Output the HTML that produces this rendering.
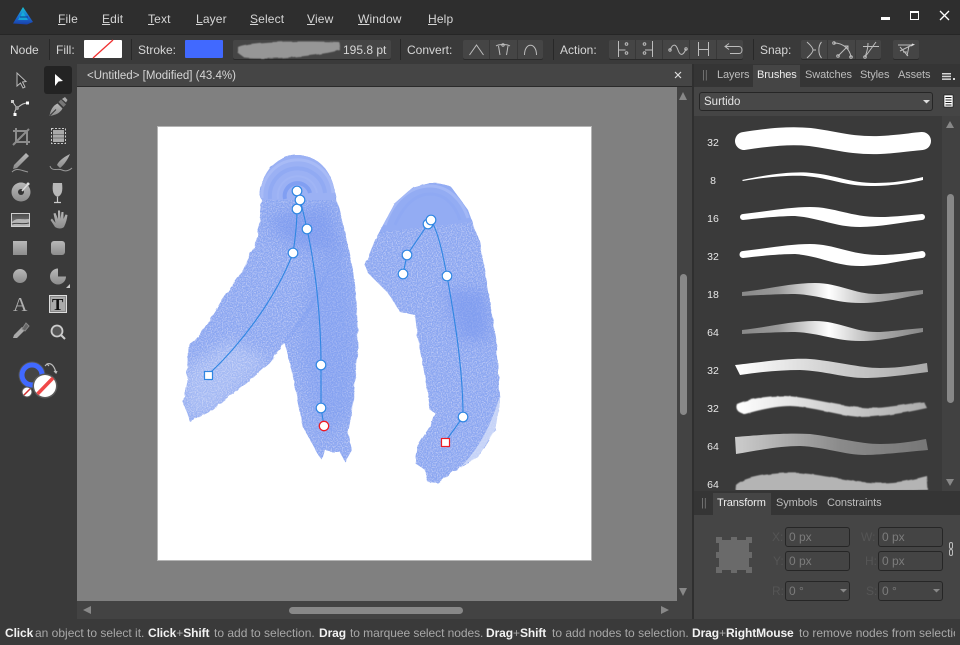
<!DOCTYPE html>
<html><head><meta charset="utf-8"><style>
html,body{margin:0;padding:0;background:#3a3a3a;}
#r{position:relative;width:960px;height:645px;overflow:hidden;background:#3a3a3a;font:12px "Liberation Sans",sans-serif;color:#d6d6d6;}
#r div,#r span.a{position:absolute;white-space:nowrap;}
.t{line-height:16px;height:16px;}
.m{letter-spacing:.15px;}
.p{font-size:11px;letter-spacing:-.1px;}
.g{background:#454545;border-radius:2px;box-shadow:0 1px 0 #2a2a2a;}
.sep{width:1px;background:#282828;top:39px;height:21px;}
.f{border:1px solid #262626;background:#444;border-radius:3px;color:#7c7c7c;box-sizing:border-box;height:20px;line-height:18px;padding-left:3px;width:65px;}
.l{color:#555;}
.n{font-size:10.5px;color:#e8e8e8;width:30px;text-align:center;left:698px;line-height:12px;}
b{color:#f2f2f2;letter-spacing:-.1px;}
svg{position:absolute;left:0;top:0;}
</style></head><body><div id="r">
<div style="left:0;top:0;width:960px;height:34px;background:#2e2e2e"></div>
<div style="left:0;top:34px;width:960px;height:1px;background:#262626"></div>
<div class="t m" style="left:58px;top:11px"><u>F</u>ile</div>
<div class="t m" style="left:102px;top:11px"><u>E</u>dit</div>
<div class="t m" style="left:148px;top:11px"><u>T</u>ext</div>
<div class="t m" style="left:196px;top:11px"><u>L</u>ayer</div>
<div class="t m" style="left:250px;top:11px"><u>S</u>elect</div>
<div class="t m" style="left:307px;top:11px"><u>V</u>iew</div>
<div class="t m" style="left:358px;top:11px"><u>W</u>indow</div>
<div class="t m" style="left:428px;top:11px"><u>H</u>elp</div>

<div class="t" style="left:10px;top:42px">Node</div>
<div class="sep" style="left:49px"></div>
<div class="t" style="left:56px;top:42px">Fill:</div>
<div class="sep" style="left:131px"></div>
<div class="t" style="left:138px;top:42px">Stroke:</div>
<div style="left:185px;top:40px;width:38px;height:18px;background:#4169ff;border-radius:1px"></div>
<div class="g" style="left:233px;top:40px;width:158px;height:19px"></div>
<div class="t" style="left:343px;top:42px">195.8 pt</div>
<div class="sep" style="left:400px"></div>
<div class="t" style="left:407px;top:42px">Convert:</div>
<div class="g" style="left:463px;top:40px;width:80px;height:19px"></div>
<div class="sep" style="left:553px"></div>
<div class="t" style="left:560px;top:42px">Action:</div>
<div class="g" style="left:609px;top:40px;width:134px;height:19px"></div>
<div class="sep" style="left:753px"></div>
<div class="t" style="left:760px;top:42px">Snap:</div>
<div class="g" style="left:801px;top:40px;width:80px;height:19px"></div>
<div class="g" style="left:893px;top:40px;width:26px;height:19px"></div>

<div style="left:77px;top:64px;width:615px;height:22px;background:#454545"></div>
<div style="left:77px;top:86px;width:615px;height:1px;background:#2a2a2a"></div>
<div class="t" style="left:87px;top:68px;font-size:11.5px">&lt;Untitled&gt; [Modified] (43.4%)</div>
<div style="left:77px;top:87px;width:600px;height:514px;background:#808080"></div>
<div style="left:677px;top:87px;width:15px;height:532px;background:#434343"></div>
<div style="left:77px;top:601px;width:615px;height:18px;background:#434343"></div>
<div style="left:680px;top:274px;width:7px;height:141px;background:#888;border-radius:4px"></div>
<div style="left:289px;top:607px;width:174px;height:7px;background:#888;border-radius:4px"></div>
<div style="left:692px;top:64px;width:2px;height:555px;background:#2f2f2f"></div>
<div style="left:158px;top:127px;width:433px;height:433px;background:#fff;box-shadow:0 0 0 1px #b4b4b4"></div>

<div style="left:694px;top:64px;width:266px;height:23px;background:#353535"></div>
<div class="t" style="left:753px;top:65px;width:47px;height:22px;background:#454545"></div>
<div class="t" style="left:702px;top:67px;color:#777;font-size:11px">||</div>
<div class="t p" style="left:717px;top:67px;color:#bcbcbc">Layers</div>
<div class="t p" style="left:757px;top:67px;color:#eee">Brushes</div>
<div class="t p" style="left:805px;top:67px;color:#bcbcbc">Swatches</div>
<div class="t p" style="left:860px;top:67px;color:#bcbcbc">Styles</div>
<div class="t p" style="left:898px;top:67px;color:#bcbcbc">Assets</div>
<div style="left:694px;top:87px;width:266px;height:29px;background:#454545"></div>
<div style="left:699px;top:92px;width:234px;height:19px;background:#484848;border:1px solid #262626;border-radius:3px;box-sizing:border-box"></div>
<div class="t" style="left:704px;top:94px;color:#e4e4e4;font-size:11.5px">Surtido</div>
<div style="left:694px;top:116px;width:248px;height:375px;background:#3a3a3a"></div>
<div style="left:942px;top:116px;width:18px;height:375px;background:#414141"></div>
<div style="left:947px;top:194px;width:7px;height:209px;background:#888;border-radius:4px"></div>
<div class="n" style="top:137px">32</div><div class="n" style="top:175px">8</div><div class="n" style="top:213px">16</div><div class="n" style="top:251px">32</div><div class="n" style="top:289px">18</div><div class="n" style="top:327px">64</div><div class="n" style="top:365px">32</div><div class="n" style="top:403px">32</div><div class="n" style="top:441px">64</div><div class="n" style="top:479px">64</div>

<div style="left:694px;top:491px;width:266px;height:24px;background:#353535"></div>
<div style="left:713px;top:493px;width:58px;height:22px;background:#454545"></div>
<div class="t" style="left:701px;top:495px;color:#777;font-size:11px">||</div>
<div class="t p" style="left:717px;top:495px;color:#eee">Transform</div>
<div class="t p" style="left:776px;top:495px;color:#bcbcbc">Symbols</div>
<div class="t p" style="left:827px;top:495px;color:#bcbcbc">Constraints</div>
<div style="left:694px;top:515px;width:266px;height:104px;background:#454545"></div>
<div class="t l" style="left:772px;top:529px">X:</div><div class="f" style="left:785px;top:527px">0 px</div>
<div class="t l" style="left:861px;top:529px">W:</div><div class="f" style="left:878px;top:527px">0 px</div>
<div class="t l" style="left:773px;top:553px">Y:</div><div class="f" style="left:785px;top:551px">0 px</div>
<div class="t l" style="left:865px;top:553px">H:</div><div class="f" style="left:878px;top:551px">0 px</div>
<div class="t l" style="left:772px;top:583px">R:</div><div class="f" style="left:785px;top:581px">0 °</div>
<div class="t l" style="left:866px;top:583px">S:</div><div class="f" style="left:878px;top:581px">0 °</div>

<div style="left:0;top:619px;width:960px;height:26px;background:#3a3a3a"></div>
<div style="left:0;top:620px;width:955px;height:25px;overflow:hidden;color:#a8a8a8">
<span class="a t" style="left:5px;top:5px"><b>Click</b></span>
<span class="a t" style="left:35px;top:5px">an object to select it.</span>
<span class="a t" style="left:148px;top:5px"><b>Click</b>+<b>Shift</b></span>
<span class="a t" style="left:214px;top:5px">to add to selection.</span>
<span class="a t" style="left:319px;top:5px"><b>Drag</b></span>
<span class="a t" style="left:350px;top:5px;letter-spacing:-.06px">to marquee select nodes.</span>
<span class="a t" style="left:486px;top:5px"><b>Drag</b>+<b>Shift</b></span>
<span class="a t" style="left:552px;top:5px">to add nodes to selection.</span>
<span class="a t" style="left:692px;top:5px"><b>Drag</b>+<b>RightMouse</b></span>
<span class="a t" style="left:799px;top:5px">to remove nodes from selection.</span>
</div>

<svg width="960" height="645" viewBox="0 0 960 645">
<defs>
<filter id="wc" x="-5%" y="-5%" width="110%" height="110%">
<feTurbulence type="fractalNoise" baseFrequency="0.12" numOctaves="3" seed="4" result="n"/>
<feDisplacementMap in="SourceGraphic" in2="n" scale="3.500" result="d"/>
<feTurbulence type="fractalNoise" baseFrequency="0.8" numOctaves="2" seed="9"/>
<feColorMatrix values="0 0 0 0 1 0 0 0 0 1 0 0 0 0 1 1 0 0 0 -0.42"/>
<feComposite in2="d" operator="in" result="w"/>
<feMerge><feMergeNode in="d"/><feMergeNode in="w"/></feMerge>
</filter>
<filter id="rough" x="-5%" y="-20%" width="110%" height="140%">
<feTurbulence type="fractalNoise" baseFrequency="0.25" numOctaves="2" seed="3"/>
<feDisplacementMap in="SourceGraphic" scale="2"/>
</filter>
<filter id="soft" x="-5%" y="-30%" width="110%" height="160%">
<feTurbulence type="fractalNoise" baseFrequency="0.1" numOctaves="2" seed="6"/>
<feDisplacementMap in="SourceGraphic" scale="2"/>
<feGaussianBlur stdDeviation=".5"/>
</filter>
<filter id="bl" x="-30%" y="-30%" width="160%" height="160%"><feGaussianBlur stdDeviation="7"/></filter>
<linearGradient id="g5"><stop offset="0" stop-color="#888"/><stop offset=".2" stop-color="#999"/><stop offset=".48" stop-color="#fff"/><stop offset=".75" stop-color="#aaa"/><stop offset="1" stop-color="#888"/></linearGradient>
<linearGradient id="g7"><stop offset="0" stop-color="#fff"/><stop offset=".5" stop-color="#d0d0d0"/><stop offset="1" stop-color="#aaa"/></linearGradient>
<linearGradient id="g9"><stop offset="0" stop-color="#ccc"/><stop offset=".55" stop-color="#8a8a8a"/><stop offset="1" stop-color="#777"/></linearGradient>
<linearGradient id="lg" x1="0" y1="0" x2="0" y2="1"><stop offset="0" stop-color="#19c4d0"/><stop offset=".55" stop-color="#1a70d8"/><stop offset="1" stop-color="#1a3fa8"/></linearGradient>
<linearGradient id="ic" x1="0" y1="0" x2="0" y2="1"><stop offset="0" stop-color="#b8b8b8"/><stop offset="1" stop-color="#8c8c8c"/></linearGradient>
<linearGradient id="sky" x1="0" y1="0" x2="0" y2="1"><stop offset="0" stop-color="#4a4a4a"/><stop offset="1" stop-color="#8a8a8a"/></linearGradient>
<clipPath id="listclip"><rect x="694" y="116" width="248" height="374"/></clipPath>
<clipPath id="pv"><rect x="158" y="127" width="433" height="433"/></clipPath>
<path id="s1" d="M260 197 C260 172 278 155 297 155 C317 155 332 170 335 193 L343 223 L353 270 L357 307 L358 350 L355 380 L353 407 L348 433 L352 450 L345 462 L340 452 L333 452 L325 450 L322 460 L317 453 L310 440 L303 427 L293 377 L285 343 L270 363 L247 383 L213 410 L190 422 L183 402 L187 380 L188 347 L203 330 L220 303 L243 270 L257 240 L262 200Z"/>
<path id="s2" d="M430 183 C440 183 450 185 452 188 L468 210 L480 243 L487 283 L497 347 L500 403 L495 430 L478 457 L455 470 L438 483 L428 482 L425 470 L415 463 L418 445 L432 423 L435 413 L430 410 L427 387 L418 340 L415 315 L400 312 L388 293 L368 273 L365 265 L375 240 L395 203 L412 188Z"/>
<clipPath id="c1"><use href="#s1"/></clipPath>
<clipPath id="c2"><use href="#s2"/></clipPath>
<path id="w1" d="M743 214 C770 211 790 207 810 207 C835 207 850 217 880 217 C895 217 910 215 922 214 A3 3 0 0 1 922 220 C905 222 880 227 860 227 C835 227 820 218 795 216 C780 216 760 218 743 220 A3 3 0 0 1 743 214Z"/>
<path id="w5" d="M742 292 C770 289 790 283 815 283 C840 283 855 295 880 294 C895 293 910 291 923 290 L923 294 C905 297 885 303 860 303 C835 303 820 295 795 294 C780 294 760 295 742 296Z"/>
</defs>

<!-- logo -->
<path d="M23 7 L33 22 L27 24.500 L13 23.500 Z" fill="url(#lg)"/>
<path d="M23 12 L28 20 L18 20Z" fill="#14c0d8" opacity=".7"/>
<path d="M20 17h8" stroke="#0f3a90"/>

<!-- window buttons -->
<rect x="881" y="17" width="9" height="3" fill="#fff"/>
<rect x="910.500" y="11.500" width="8" height="8" fill="none" stroke="#fff"/><rect x="910" y="11" width="9" height="2" fill="#fff"/>
<path d="M940 11 L949 20 M949 11 L940 20" stroke="#fff" stroke-width="1.300"/>

<!-- fill swatch -->
<rect x="84" y="40" width="38" height="18" rx="1" fill="#fff"/>
<path d="M93 58 L113 40" stroke="#f03030" stroke-width="1.300"/>
<!-- stroke preview -->
<path d="M238 47 C250 41 300 41 339 42 L340 50 C320 56 270 60 245 58 L238 53Z" fill="#969696" filter="url(#soft)"/>

<!-- toolbar separators & icons -->
<g stroke="#383838"><path d="M489.500 40v19M517.500 40v19M635.500 40v19M662.500 40v19M689.500 40v19M716.500 40v19M827.500 40v19M855.500 40v19"/></g>
<g fill="none" stroke="#bdbdbd" stroke-width="1">
<path d="M469.500 55 L476.500 45 L483.500 55"/>
<path d="M496 46 C499 44 507 44 510 46 M498.500 46 L500 55 M508 46 L506.500 55"/><circle cx="503" cy="45" r="1.200"/>
<path d="M524.500 55 C524.500 42 536.500 42 536.500 55"/>
<path d="M618.500 41v16M618.500 50h7"/><circle cx="626.500" cy="44" r="1.300"/><circle cx="626.500" cy="53" r="1.300"/>
<path d="M652.500 41v16M645 50h7.500"/><circle cx="644.500" cy="44" r="1.300"/><circle cx="644.500" cy="53" r="1.300"/>
<path d="M670 50 C673 43 676 44 678 50 C680 56 683 56 686 49"/><circle cx="670" cy="50" r="1.200"/><circle cx="686" cy="49" r="1.200"/>
<path d="M698.500 42v14M708.500 42v14M698.500 49.500h10"/>
<path d="M725 46.500h14c4 0 4 7 0 7h-9M729 43.500l-4 3 4 3"/>
<path d="M807 42 C811.500 46 813 48 813 50 C813 52 811.500 54 807 58 M813 50h3M821.500 42 C818 46 818 54 821.500 58"/>
<path d="M834 43 C844 43 850 50 851 57 M838 56 L848 46 M844 46h4v4"/><circle cx="834" cy="43" r="1.300"/><circle cx="838" cy="56" r="1.300"/><circle cx="851" cy="57" r="1.300"/>
<path d="M863 46.500h16M865 57 L876 42M868 43 C868 50 866 54 865 57"/><circle cx="865" cy="57" r="1.300"/>
<path d="M898 45h14l-12 6M909 46 L907 56M903 52h4M900 47l8 9"/>
</g>
<path d="M915 44.500l-4 2 1 -3Z" fill="#ddd"/>

<!-- scroll arrows -->
<g fill="#888">
<path d="M683 92 L687 100 L679 100Z"/><path d="M679 588 L687 588 L683 596Z"/>
<path d="M83 610 L91 606 L91 614Z"/><path d="M661 606 L669 610 L661 614Z"/>
<path d="M950 121 L954 128 L946 128Z"/><path d="M946 479 L954 479 L950 486Z"/>
</g>
<path d="M675 72 L681 78 M681 72 L675 78" stroke="#ddd" stroke-width="1.200"/>

<!-- panel misc -->
<g fill="#d8d8d8"><rect x="942" y="73" width="9" height="1.500"/><rect x="942" y="75.700" width="9" height="1.500"/><rect x="942" y="78.400" width="9" height="1.500"/><rect x="953" y="78" width="2" height="2"/></g>
<path d="M923 100h7l-3.500 3.500Z" fill="#ddd"/>
<rect x="944" y="95" width="9" height="12" fill="#fff" stroke="#111" stroke-width=".6"/>
<path d="M945.500 97.500h6M945.500 100h6M945.500 102.500h6M945.500 105h6" stroke="#222"/>

<!-- tools -->
<g>
<rect x="44" y="66" width="28" height="28" rx="3" fill="#232323"/>
<path d="M55 74 L63 81 L58.500 81.500 L55 86Z" fill="#fff"/>
<path d="M17 73 L17 86 L20.500 83 L23 88 L25 87 L22.500 82 L26 81.500Z" fill="#2e2e2e" stroke="#bbb"/>
<!-- node tool -->
<g stroke="#c8c8c8" fill="none"><path d="M12 101 L17 108 C22 104 24 103 28 103 M15 115 C14 112 15 110 17 108"/></g>
<circle cx="17" cy="108" r="2" fill="#999"/><rect x="26" y="101.500" width="3" height="3" fill="#fff"/><rect x="13.500" y="113" width="3" height="3" fill="#fff"/><rect x="11" y="100" width="3" height="3" fill="#ccc"/>
<!-- pen -->
<path d="M49.500 116 C50.500 110 52.500 106 57.500 103.500 L62.500 108.500 C60 113 56 115 49.500 116Z" fill="url(#ic)"/><path d="M58.500 102 L61 99.500 L66 104.500 L63.500 107Z" fill="#777"/><path d="M62 99 L65 97 L67.500 100 L66 102.500Z" fill="#aaa"/><path d="M50 115.500 L56 109.500" stroke="#333"/>
<!-- crop -->
<path d="M16 128v14h14M13 131h14v14M29 129L13 145" fill="none" stroke="#8c8c8c" stroke-width="2"/>
<!-- vector crop -->
<rect x="53" y="130" width="11" height="12" fill="#aaa"/><path d="M53 134.500h11M53 138h11" stroke="#777"/><rect x="51.500" y="128.500" width="14" height="15" fill="none" stroke="#ccc" stroke-dasharray="2 1.500"/>
<!-- pencil -->
<path d="M13 169 L14 165 L26 153 L29 156 L17 168Z" fill="url(#ic)"/><path d="M12 172 C17 167 22 171 28 172" fill="none" stroke="#999"/>
<!-- brush -->
<path d="M57 165 C59 160 66 156 70 154 C68 159 64 165 60 168Z" fill="url(#ic)"/><path d="M50 166 C52 172 58 168 62 170 C66 172 70 170 72 168" fill="none" stroke="#999"/>
<!-- fill tool -->
<circle cx="21" cy="192" r="9.500" fill="url(#ic)"/><circle cx="21" cy="192" r="3" fill="#333"/><path d="M22 191 L29 183" stroke="#ddd" stroke-width="1.500"/><circle cx="28" cy="184" r="1.500" fill="#ddd"/>
<!-- glass -->
<path d="M53 183h9c1 8 0 12 -4.500 14c-4.500-2-5.500-6-4.500-14Z" fill="#b8b8b8"/><path d="M57.500 197v5M54 202.500h7" stroke="#ccc" stroke-width="1.200"/>
<!-- image -->
<rect x="11.500" y="213.500" width="18" height="13" fill="url(#sky)" stroke="#cfcfcf"/><path d="M12 222 C17 217 20 220 29 219 V226 H12Z" fill="#b4b4b4"/><path d="M12 224 C17 222 22 225 29 223" stroke="#444" fill="none"/>
<!-- hand -->
<path d="M50.500 220 L55 227 C58 229 62 229 64 227 C66 223 67 219 67.500 215 L65.500 214.500 L63.500 219 L63.500 212 L61.500 212 L60.500 219 L60 210.500 L58 210.500 L58 219 L55.500 213 L53.500 213.500 L55.500 223 L52 218.500Z" fill="url(#ic)"/>
<!-- shapes -->
<rect x="13" y="241" width="14" height="14" fill="url(#ic)"/>
<rect x="51" y="241" width="14" height="14" rx="3" fill="url(#ic)"/>
<circle cx="20" cy="276" r="7" fill="url(#ic)"/>
<path d="M58 268.500 A8 8 0 1 0 66 276.500 L58 276.500Z" fill="url(#ic)"/><path d="M66 288 L70 284 V288Z" fill="#ccc"/>
<!-- text -->
<text x="13" y="311" font-family="Liberation Serif" font-size="20" fill="#b0b0b0">A</text>
<rect x="49.500" y="295.500" width="17" height="17" fill="#888" stroke="#ddd"/><rect x="51" y="297" width="14" height="14" fill="#aaa"/>
<text x="52" y="310" font-family="Liberation Serif" font-size="17" font-weight="bold" fill="#111">T</text>
<!-- dropper -->
<path d="M13 338 L14 335 L22 327 L25 330 L17 338Z" fill="#aaa"/><path d="M22 329 L26 323 L29 326 L25 331Z" fill="#666" stroke="#888"/>
<!-- zoom -->
<circle cx="57" cy="331" r="5.500" fill="#555" stroke="#ccc" stroke-width="1.800"/><path d="M61 335 L65 339" stroke="#ccc" stroke-width="2"/>
<!-- colours -->
<circle cx="32" cy="375" r="13.500" fill="#555"/><circle cx="32" cy="375" r="10" fill="#454545" stroke="#4169ff" stroke-width="5"/>
<circle cx="45" cy="386" r="12.500" fill="#5a5a5a"/><circle cx="45" cy="386" r="11" fill="#fff"/><path d="M37.500 394 L53 378" stroke="#f04848" stroke-width="3.500"/>
<circle cx="27" cy="392" r="5.500" fill="#555"/><circle cx="27" cy="392" r="4.500" fill="#fff"/><path d="M24 395 L30 389" stroke="#d03030" stroke-width="1.500"/>
<path d="M47 364 C52 362 55 368 56 373 M45 366l2-2 2 2M54 371l2 2 1-2" fill="none" stroke="#bbb" stroke-width="1.200"/>
</g>

<!-- anchor, chain -->
<g fill="#6a6a6a"><rect x="719" y="540" width="30" height="30"/>
<rect x="716" y="537" width="6" height="6"/><rect x="731" y="537" width="6" height="6"/><rect x="746" y="537" width="6" height="6"/>
<rect x="716" y="552" width="6" height="6"/><rect x="746" y="552" width="6" height="6"/>
<rect x="716" y="567" width="6" height="6"/><rect x="731" y="567" width="6" height="6"/><rect x="746" y="567" width="6" height="6"/></g>
<g fill="none" stroke="#bbb"><rect x="949.500" y="542.500" width="3" height="6" rx="1.500"/><rect x="949.500" y="549.500" width="3" height="6" rx="1.500"/></g>
<path d="M840 589h7l-3.500 3.500Z" fill="#888"/><path d="M933 589h7l-3.500 3.500Z" fill="#888"/>

<!-- brushes list -->
<g clip-path="url(#listclip)" fill="#fff">
<path d="M744 141 C770 137 790 135 810 137 C835 140 850 146 880 145 C900 144 910 142 922 141" fill="none" stroke="#fff" stroke-width="18" stroke-linecap="round"/>
<path d="M742 180 C770 174 795 171 812 173 C835 175 850 183 875 183 C895 183 910 180 923 177 L923 180 C905 184 890 186 870 186 C845 186 830 178 805 176 C790 175 765 177 743 181Z"/>
<use href="#w1"/>
<path d="M743 251 C770 248 790 244 810 244 C835 244 850 255 880 255 C895 255 910 253 922 251 A3.500 3.500 0 0 1 922 258 C905 260 880 266 860 266 C835 266 820 256 795 254 C780 254 760 256 743 258 A3.500 3.500 0 0 1 743 251Z" />
<use href="#w5" fill="url(#g5)"/>
<use href="#w5" fill="url(#g5)" transform="translate(0 38)"/>
<path d="M735 365 C770 361 790 358 810 359 C835 361 860 368 880 368 C900 368 915 365 927 363 L928 372 C905 375 880 378 865 378 C845 378 825 371 800 370 C780 370 760 372 740 375Z" fill="url(#g7)"/>
<path d="M737 404 C750 398 770 396 785 396 C810 397 840 407 870 408 C890 408 910 403 924 402 L927 408 C905 413 880 417 860 417 C835 415 815 407 790 406 C775 406 760 410 745 414 C738 413 735 409 737 404Z" fill="url(#g7)" filter="url(#soft)"/>
<path d="M735 437 C770 434 790 433 810 434 C835 437 860 444 880 444 C900 444 915 441 926 439 L928 450 C905 452 880 455 865 455 C845 455 825 447 800 446 C780 446 760 450 736 454Z" fill="url(#g9)"/>
<path d="M736 485 C745 476 775 472 800 473 C825 475 855 483 880 483 C900 483 915 479 927 476 L928 490 L735 495Z" fill="#b4b4b4" filter="url(#soft)"/>
</g>

<!-- artwork -->
<g clip-path="url(#pv)">
<use href="#s1" fill="#8aa6f1" filter="url(#wc)"/>
<g clip-path="url(#c1)">
<path d="M340 240 L354 290 L357 350 L352 410 L325 440 L310 400 L300 350 L310 270Z" fill="#7b9bf0" opacity=".35" filter="url(#bl)"/>
<path d="M283 343 C300 320 320 290 331 262 C320 300 300 330 285 343Z" fill="#7f9df0" opacity=".35"/>
<path d="M270 215 L330 205 L340 250 L300 250 L272 230Z" fill="#7896ee" opacity=".55" filter="url(#bl)"/>
<path d="M185 420 L183 370 L230 340 L270 360 L215 412Z" fill="#fff" opacity=".22" filter="url(#bl)"/>
<path d="M260 197 C260 172 278 155 297 155 C317 155 332 170 335 193 L335 200 L260 200Z" fill="#9bb1f4"/>
<g fill="none">
<path d="M262 198 A35 35 0 0 1 333 193" stroke="#a8bbf6" stroke-width="3"/>
<path d="M270 199 A27 27 0 0 1 325 193" stroke="#8fa9f3" stroke-width="4" opacity=".8"/>
<path d="M278 199 A19 19 0 0 1 317 193" stroke="#a0b5f5" stroke-width="2"/>
<path d="M285 199 A12 12 0 0 1 310 193" stroke="#819ff2" stroke-width="4"/>
</g>
</g>
<use href="#s2" fill="#8aa6f1" filter="url(#wc)"/>
<g clip-path="url(#c2)">
<path d="M445 290 L485 290 L490 340 L460 340Z" fill="#7896ee" opacity=".6" filter="url(#bl)"/>
<path d="M500 395 L505 430 L478 462 L455 472 C475 455 490 430 500 395Z" fill="#d4def9" opacity=".8"/>
<path d="M380 225 L395 203 L412 188 C420 184 428 183 430 183 C440 183 450 185 452 188 L468 210 L472 222 L380 232Z" fill="#93acf3"/>
<g fill="none">
<path d="M385 225 C395 195 415 186 430 186 C448 186 462 200 468 218" stroke="#a8bbf6" stroke-width="3" opacity=".8"/>
<path d="M395 225 C405 202 418 194 430 194 C445 194 455 205 460 220" stroke="#8fa9f3" stroke-width="3" opacity=".8"/>
</g>
</g>
<!-- node lines -->
<g fill="none" stroke="#2f86e2" stroke-width="1.100">
<path d="M208 375 C240 345 275 300 293 253 C295 240 297 225 297 209"/>
<path d="M297 191 L300 200 C303 210 305 220 307 229 C316 270 321 320 321 365 L321 408 L324 426"/>
<path d="M445 442 L463 417 C463 370 455 320 447 276 C442 250 438 232 431 220"/>
<path d="M428 224 L407 255 L403 274"/>
</g>
<g fill="#fff" stroke="#2f86e2" stroke-width="1.200">
<circle cx="293" cy="253" r="4.800"/><circle cx="297" cy="209" r="4.800"/><circle cx="297" cy="191" r="4.800"/><circle cx="300" cy="200" r="4.800"/><circle cx="307" cy="229" r="4.800"/><circle cx="321" cy="365" r="4.800"/><circle cx="321" cy="408" r="4.800"/>
<circle cx="463" cy="417" r="4.800"/><circle cx="447" cy="276" r="4.800"/><circle cx="428" cy="224" r="4.800"/><circle cx="431" cy="220" r="4.800"/><circle cx="407" cy="255" r="4.800"/><circle cx="403" cy="274" r="4.800"/>
<rect x="204.500" y="371.500" width="8" height="8"/>
</g>
<circle cx="324" cy="426" r="4.700" fill="#fff" stroke="#ee1c25" stroke-width="1.300"/>
<rect x="441.500" y="438.500" width="8" height="8" fill="#fff" stroke="#ee1c25" stroke-width="1.200"/>
</g>
</svg>
</div></body></html>
